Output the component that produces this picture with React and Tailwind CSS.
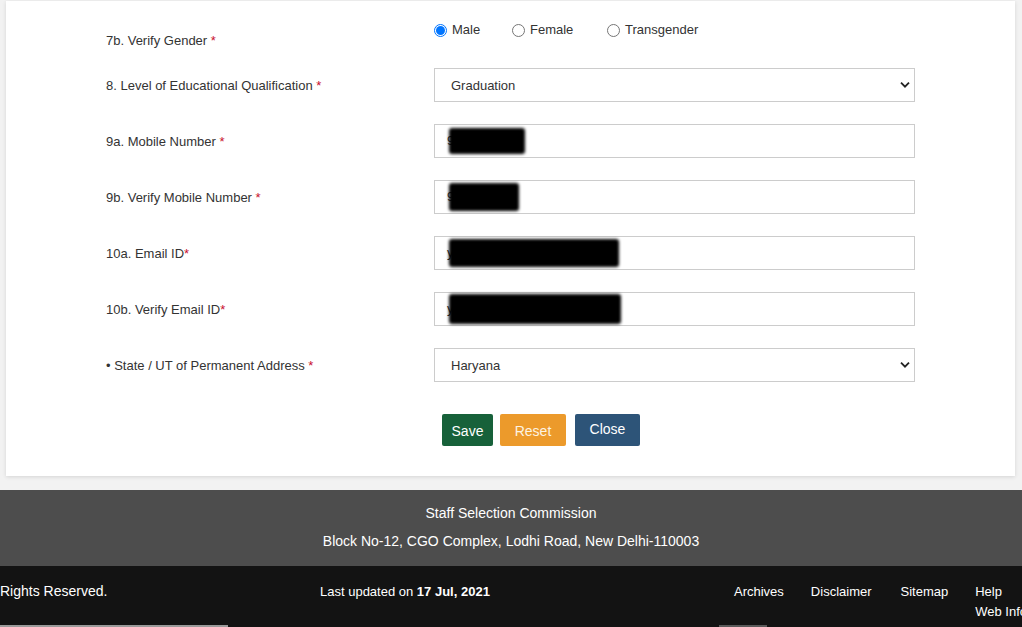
import React from "react";

const font = { fontFamily: '"Liberation Sans", Arial, sans-serif' };

function Star() {
  return <span className="text-[#c8102e]">*</span>;
}

function Chevron() {
  return (
    <svg width="10" height="7" viewBox="0 0 10 7" className="absolute right-[4px] top-1/2 -translate-y-1/2">
      <path d="M1 1.2 L5 5.2 L9 1.2" fill="none" stroke="#222" strokeWidth="1.8" />
    </svg>
  );
}

function Blob({ w, h, first }) {
  return (
    <div className="relative flex h-full items-center pl-[12px]">
      <span className="text-[13px] text-[#333]">{first}</span>
      <div
        className="absolute top-1/2 -translate-y-1/2 rounded-[3px] bg-black blur-[1.5px]"
        style={{ left: 14, width: w, height: h }}
      />
    </div>
  );
}

function Row({ label, children }) {
  return (
    <div className="mb-[22px] flex h-[34px] items-center">
      <div className="w-[328px] pt-[2px] text-[13px] text-[#333]">{label}</div>
      <div className="relative h-[34px] w-[481px] border border-[#ccc] bg-white">{children}</div>
    </div>
  );
}

function Radio({ label, checked }) {
  return (
    <div className="flex items-center gap-[5px]">
      {checked ? (
        <span className="flex h-[13px] w-[13px] items-center justify-center rounded-full border border-[#0075ff] bg-white">
          <span className="h-[9px] w-[9px] rounded-full bg-[#0075ff]" />
        </span>
      ) : (
        <span className="h-[13px] w-[13px] rounded-full border border-[#767676] bg-white" />
      )}
      <span className="text-[13px] text-[#333]">{label}</span>
    </div>
  );
}

export default function App() {
  return (
    <div className="min-h-screen overflow-hidden bg-[#f2f2f2]" style={font}>
      <div className="pt-[1px] pl-[6px] pr-[7px]">
        <div className="bg-white pl-[100px] pt-[19px] pb-[30px] shadow-[0_1px_4px_rgba(0,0,0,0.12)]">
          <div className="flex h-[48px] items-start">
            <div className="w-[328px] pt-[12px] text-[13px] leading-[18px] text-[#333]">
              7b. Verify Gender <Star />
            </div>
            <div className="flex pt-[1px] leading-[18px]">
              <div className="w-[78px]"><Radio label="Male" checked /></div>
              <div className="w-[95px]"><Radio label="Female" /></div>
              <Radio label="Transgender" />
            </div>
          </div>

          <Row label={<>8. Level of Educational Qualification <Star /></>}>
            <div className="flex h-full items-center pl-[16px] pt-[1px] text-[13px] text-[#333]">Graduation</div>
            <Chevron />
          </Row>
          <Row label={<>9a. Mobile Number <Star /></>}>
            <Blob w={76} h={26} first="9" />
          </Row>
          <Row label={<>9b. Verify Mobile Number <Star /></>}>
            <Blob w={70} h={28} first="9" />
          </Row>
          <Row label={<>10a. Email ID<Star /></>}>
            <Blob w={170} h={28} first="y" />
          </Row>
          <Row label={<>10b. Verify Email ID<Star /></>}>
            <Blob w={172} h={30} first="y" />
          </Row>
          <Row label={<>• State / UT of Permanent Address <Star /></>}>
            <div className="flex h-full items-center pl-[16px] pt-[1px] text-[13px] text-[#333]">Haryana</div>
            <Chevron />
          </Row>

          <div className="mt-[32px] flex items-start pl-[336px]">
            <button className="h-[32px] w-[51px] rounded-[2px] bg-[#17613a] pt-[2px] text-[14px] text-white">Save</button>
            <button className="ml-[7px] h-[32px] w-[66px] rounded-[2px] bg-[#ec9a2b] pt-[2px] text-[14px] text-[#fdf3e2]">Reset</button>
            <button className="ml-[9px] h-[32px] w-[65px] rounded-[2px] bg-[#2d5478] pb-[2px] text-[14px] text-white">Close</button>
          </div>
        </div>
      </div>

      <footer className="mt-[14px]">
        <div className="flex h-[76px] flex-col items-center bg-[#4d4d4d] pt-[9px] text-[14px] text-white">
          <div className="leading-[28px]">Staff Selection Commission</div>
          <div className="leading-[28px]">Block No-12, CGO Complex, Lodhi Road, New Delhi-110003</div>
        </div>
        <div className="relative flex h-[61px] overflow-hidden bg-[#131313] text-[13px] text-white">
          <div className="w-[320px] shrink-0 pt-[15px] text-[14px]">Rights Reserved.</div>
          <div className="w-[414px] shrink-0 pt-[16px]">
            Last updated on <span className="font-bold">17 Jul, 2021</span>
          </div>
          <div className="flex shrink-0 gap-[27px] whitespace-nowrap pt-[16px]">
            <span>Archives</span>
            <span className="mr-[2px]">Disclaimer</span>
            <span>Sitemap</span>
            <span className="leading-[20px]">Help<br />Web Information Manager</span>
          </div>
          <div className="absolute bottom-0 left-0 h-[2px] w-[228px] bg-[#9a9a9a]" />
          <div className="absolute bottom-0 left-[719px] h-[2px] w-[48px] bg-[#5a5a5a]" />
        </div>
      </footer>
    </div>
  );
}
